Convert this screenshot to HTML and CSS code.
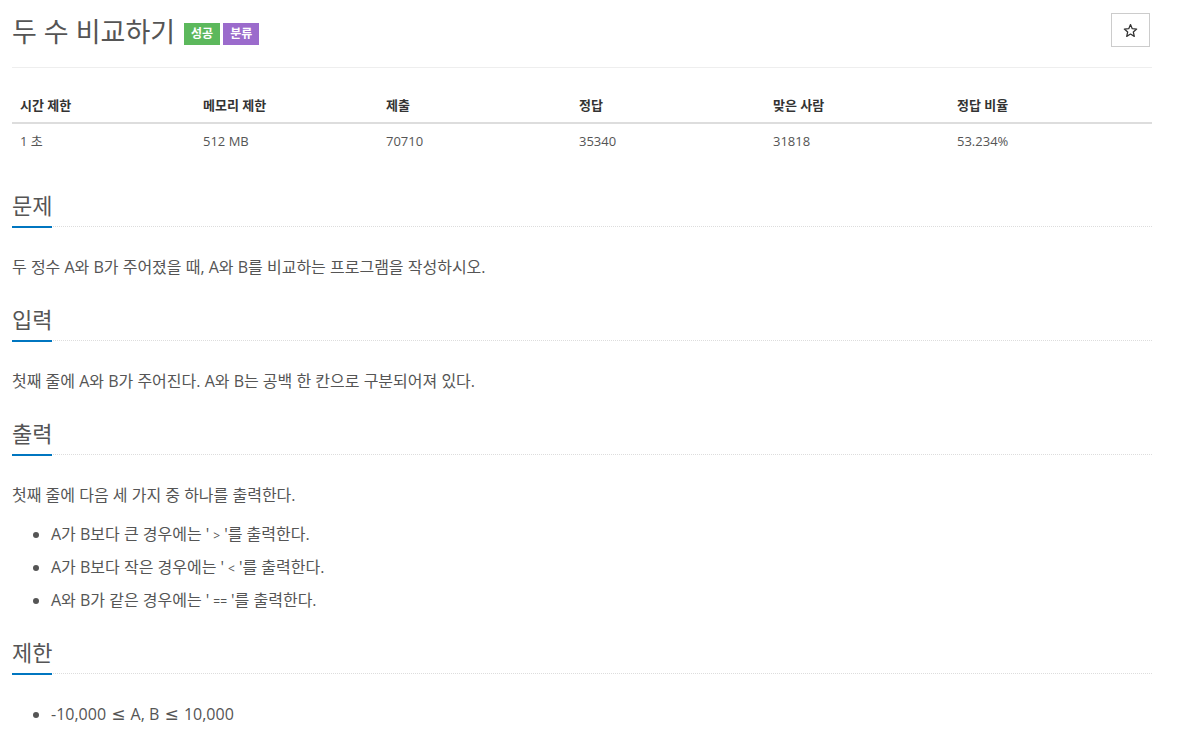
FILE: index.html
```html
<!DOCTYPE html>
<html lang="ko">
<head>
  <meta charset="UTF-8">
  <meta name="viewport" content="width=device-width, initial-scale=1.0">
  <title>두 수 비교하기</title>
  <link rel="stylesheet" href="styles.css">
</head>
<body>
  <div class="container">

    <!-- 제목 -->
    <div class="page-header">
      <h1>
        <span id="problem_title">두 수 비교하기</span>
        <span class="label label-success">성공</span><span class="label label-purple">분류</span>
      </h1>
      <button class="btn-star" type="button" title="즐겨찾기">
        <svg width="15" height="15" viewBox="0 0 24 24"><path d="M12 2.5l2.8 6.6 7.1.6-5.4 4.7 1.6 7-6.1-3.7-6.1 3.7 1.6-7-5.4-4.7 7.1-.6z" fill="none" stroke="#333" stroke-width="2" stroke-linejoin="round"/></svg>
      </button>
    </div>

    <!-- 정보 -->
    <table class="problem-info">
      <thead>
        <tr>
          <th class="c1">시간 제한</th>
          <th class="c2">메모리 제한</th>
          <th class="c3">제출</th>
          <th class="c4">정답</th>
          <th class="c5">맞은 사람</th>
          <th>정답 비율</th>
        </tr>
      </thead>
      <tbody>
        <tr>
          <td>1 초 </td>
          <td>512 MB</td>
          <td>70710</td>
          <td>35340</td>
          <td>31818</td>
          <td>53.234%</td>
        </tr>
      </tbody>
    </table>

    <section>
      <div class="headline"><h2>문제</h2></div>
      <p>두 정수 A와 B가 주어졌을 때, A와 B를 비교하는 프로그램을 작성하시오.</p>
    </section>

    <section>
      <div class="headline"><h2>입력</h2></div>
      <p>첫째 줄에 A와 B가 주어진다. A와 B는 공백 한 칸으로 구분되어져 있다.</p>
    </section>

    <section>
      <div class="headline"><h2>출력</h2></div>
      <p>첫째 줄에 다음 세 가지 중 하나를 출력한다.</p>
      <ul>
        <li>A가 B보다 큰 경우에는 '<code>&gt;</code>'를 출력한다.</li>
        <li>A가 B보다 작은 경우에는 '<code>&lt;</code>'를 출력한다.</li>
        <li>A와 B가 같은 경우에는 '<code>==</code>'를 출력한다.</li>
      </ul>
    </section>

    <section>
      <div class="headline"><h2>제한</h2></div>
      <ul>
        <li>-10,000 <span class="op">≤</span> A, B <span class="op">≤</span> 10,000</li>
      </ul>
    </section>

  </div>
</body>
</html>
```

FILE: styles.css
```css
body { margin: 0; font-family: 'Open Sans', 'Noto Sans CJK KR', sans-serif; color: #555; background: #fff; }
.container { width: 1140px; margin: 0 12px; }

.page-header { display: flex; justify-content: space-between; align-items: flex-start; padding: 14px 0 17px; border-bottom: 1px solid #eee; margin-bottom: 20px; }
.page-header h1 { margin: 0; font-size: 27px; line-height: 36px; font-weight: 400; color: #555; display: flex; align-items: center; }
.label { display: inline-block; font-size: 12px; font-weight: 700; color: #fff; line-height: 22px; height: 22px; padding: 0 7px; margin-top: 3px; }
.label-success { background: #5cb85c; margin-left: 9px; margin-right: 3px; }
.label-purple { background: #9b6bcc; }
.btn-star { width: 39px; height: 34px; margin: -1px 2px 0 0; border: 1px solid #ccc; background: #fff; padding: 0; display: flex; align-items: center; justify-content: center; }

.problem-info { width: 100%; border-collapse: collapse; margin-bottom: 32px; font-size: 13px; }
.problem-info th, .problem-info td { text-align: left; padding: 8px; line-height: 18px; }
.problem-info th { color: #333; font-weight: 700; border-bottom: 2px solid #ddd; }
.problem-info td { color: #555; }
.c1, .c2 { width: 167px; }
.c3 { width: 177px; }
.c4 { width: 178px; }
.c5 { width: 168px; }

.headline { margin: 25px 0 28px; border-bottom: 1px dotted #ddd; }
.headline h2 { display: inline-block; margin: 0 0 -2px; padding-bottom: 6px; border-bottom: 2px solid #0076c0; font-size: 22px; line-height: 30px; font-weight: 400; color: #555; }

p { margin: 0 0 15px; font-size: 16px; line-height: 24px; }
ul { margin: 0; padding-left: 39px; font-size: 16px; line-height: 24px; }
li { margin-bottom: 9px; height: 24px; }
code { font-family: 'Open Sans', sans-serif; font-size: 12px; line-height: 1; padding: 0 4px; color: #555; }
.op { font-family: 'DejaVu Sans', sans-serif; font-size: 17px; line-height: 1; padding: 0 1px; }
```
